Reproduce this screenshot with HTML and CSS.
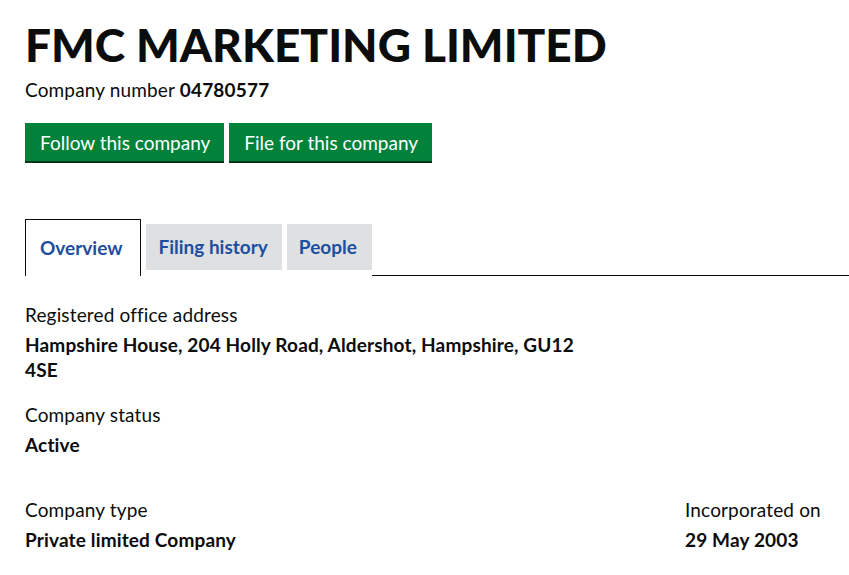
FILE: index.html
```html
<!DOCTYPE html>
<html lang="en">
<head>
<meta charset="utf-8">
<title>FMC MARKETING LIMITED</title>
<link rel="stylesheet" href="styles.css">
</head>
<body>
<main class="page">
  <h1 class="heading">FMC MARKETING LIMITED</h1>
  <p class="company-number">Company number <strong>04780577</strong></p>
  <div class="actions">
    <a class="button" href="#">Follow this company</a>
    <a class="button" href="#">File for this company</a>
  </div>
  <nav class="tabs">
    <a class="tab tab-active" href="#">Overview</a>
    <a class="tab" href="#">Filing history</a>
    <a class="tab" href="#">People</a>
    <span class="tab-rest"></span>
  </nav>
  <dl class="details">
    <dt>Registered office address</dt>
    <dd class="address">Hampshire House, 204 Holly Road, Aldershot, Hampshire, GU12 4SE</dd>
    <dt>Company status</dt>
    <dd>Active</dd>
  </dl>
  <div class="columns">
    <dl class="details">
      <dt>Company type</dt>
      <dd>Private limited Company</dd>
    </dl>
    <dl class="details">
      <dt>Incorporated on</dt>
      <dd>29 May 2003</dd>
    </dl>
  </div>
</main>
</body>
</html>
```

FILE: styles.css
```css
* { box-sizing: border-box; }
html, body { margin: 0; padding: 0; background: #fff; }
body {
  font-family: Lato, "Liberation Sans", sans-serif;
  color: #0b0c0c;
}
.page { padding: 20px 0 0 25px; }
.heading {
  margin: 0;
  font-size: 46px;
  line-height: 50px;
  font-weight: 900;
}
.company-number {
  margin: 7px 0 0;
  font-size: 19px;
  line-height: 25px;
  letter-spacing: 0.15px;
}
.company-number strong { font-weight: 700; letter-spacing: 0.2px; }
.actions { display: flex; gap: 5px; margin-top: 21px; }
.button {
  display: block;
  background: #00823b;
  color: #fff;
  text-decoration: none;
  font-size: 19px;
  line-height: 25px;
  padding: 7px 14px 6px 15px;
  box-shadow: 0 2px 0 #003618;
}
.tabs { display: flex; align-items: flex-start; margin-top: 58px; }
.tab {
  display: block;
  margin-top: 5px;
  margin-right: 5px;
  background: #dee0e2;
  color: #1d4ea0;
  font-weight: 700;
  font-size: 19px;
  line-height: 24px;
  text-decoration: none;
  padding: 11px 14px 11px 12px;
}
.tab-active {
  margin-top: 0;
  background: #fff;
  border: 1px solid #0b0c0c;
  border-bottom: 0;
  padding: 16px 18px 16px 14px;
}
.tab:nth-child(3) { margin-right: 0; padding-right: 15px; padding-left: 12px; }
.tab-rest { flex: 1; align-self: stretch; border-bottom: 1px solid #0b0c0c; }
.details { margin: 0; }
.details dt { font-size: 19px; line-height: 25px; letter-spacing: 0.15px; }
.details dd { margin: 5px 0 0; font-size: 19px; line-height: 25px; font-weight: 700; letter-spacing: 0.15px; }
.page > .details { margin-top: 26px; }
.page > .details dd { margin-bottom: 20px; }
.address { max-width: 565px; }
.columns { display: grid; grid-template-columns: 660px 1fr; margin-top: 40px; }
```
